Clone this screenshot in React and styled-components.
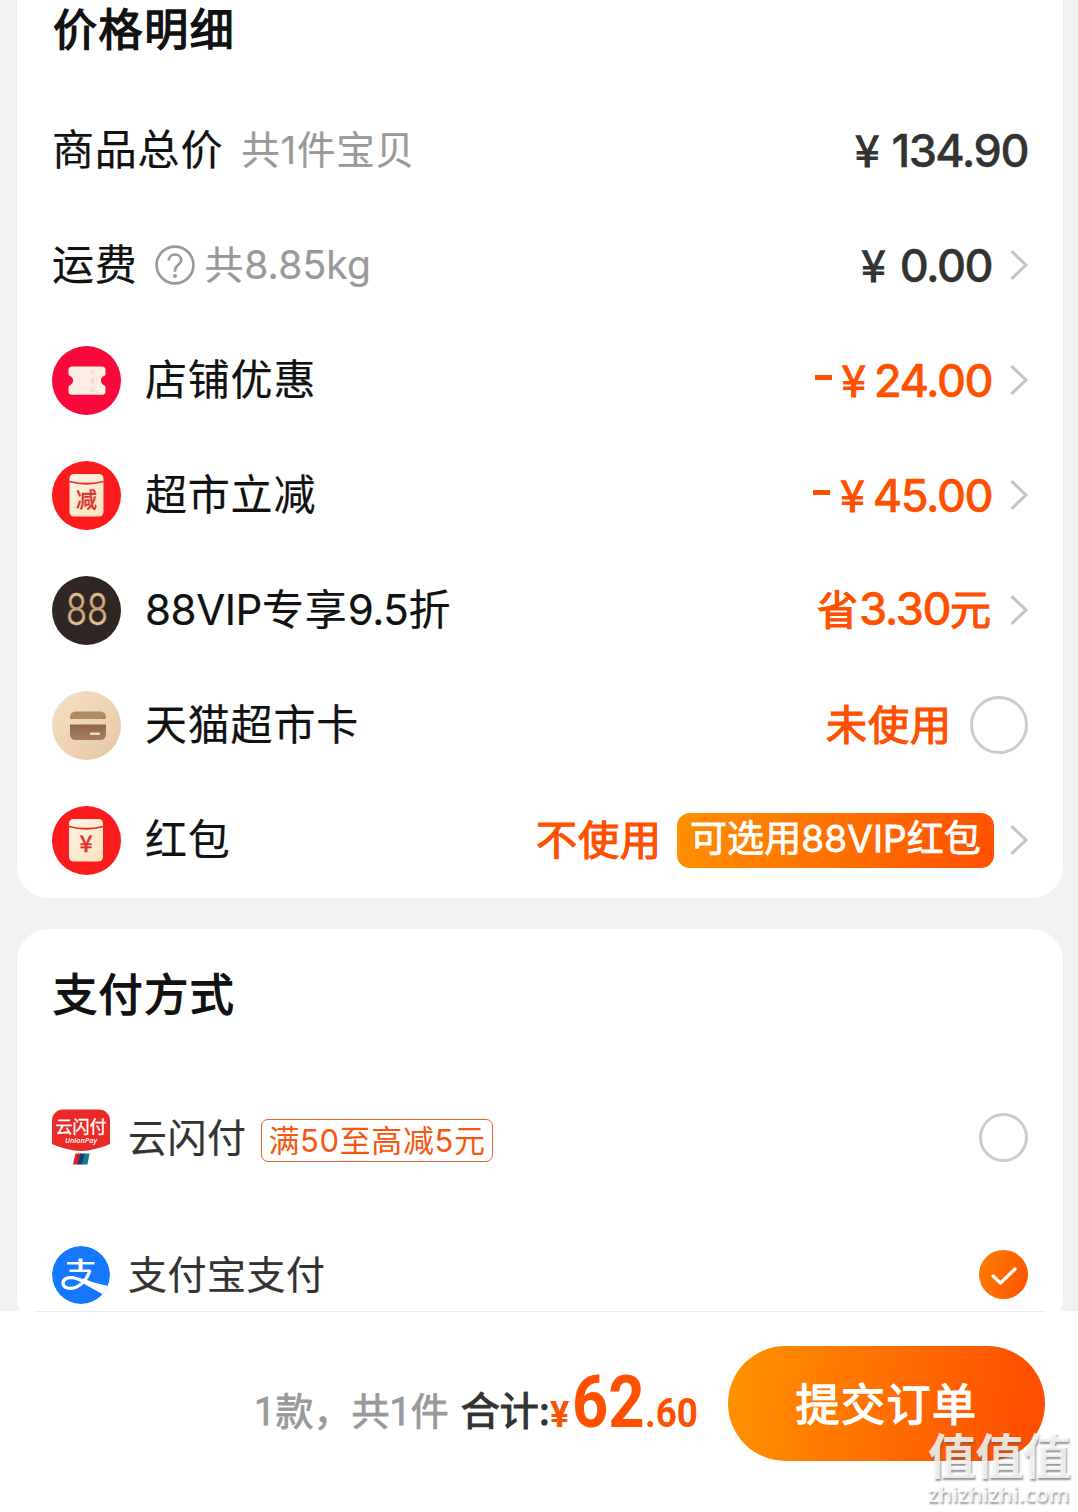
import React from "react";
import styled, { createGlobalStyle } from "styled-components";

const Global = createGlobalStyle`
  * { box-sizing: border-box; }
  body {
    margin: 0;
    background: #fff;
    font-family: Inter, "Noto Sans CJK SC", sans-serif;
  }
`;

const Page = styled.main`
  position: relative;
  width: 1078px;
  height: 1512px;
  overflow: hidden;
  display: flex;
  flex-direction: column;
`;

const Scroll = styled.div`
  flex: none;
  height: 1311px;
  overflow: hidden;
  background: #f1f1f1;
  display: flex;
  flex-direction: column;
  gap: 31px;
  padding: 0 15px 0 17px;
`;

const Card = styled.section`
  flex: none;
  background: #fff;
  border-radius: ${(p) => (p.$first ? "0 0 32px 32px" : "32px")};
  padding: 0 35px;
  height: ${(p) => p.$height}px;
`;

const Title = styled.h2`
  margin: 0;
  padding-top: ${(p) => p.$top}px;
  padding-left: 1px;
  height: ${(p) => p.$height}px;
  font-size: 44px;
  line-height: 60px;
  font-weight: 400;
  letter-spacing: 1.6px;
  color: #111;
  -webkit-text-stroke: 1.4px #111;
`;

const Row = styled.div`
  display: flex;
  align-items: center;
  justify-content: space-between;
  height: ${(p) => p.$height || 115}px;
`;

const Side = styled.div`
  display: flex;
  align-items: center;
  gap: ${(p) => p.$gap || 0}px;
`;

const Label = styled.span`
  font-size: ${(p) => p.$size || 42}px;
  line-height: 60px;
  letter-spacing: ${(p) => p.$spacing ?? 0.8}px;
  color: ${(p) => p.$color || "#111"};
  -webkit-text-stroke: 0.2px currentColor;
  white-space: nowrap;
`;

const Latin = styled.span`
  letter-spacing: ${(p) => p.$spacing ?? -0.4}px;
`;

const Amount = styled.span`
  display: flex;
  align-items: baseline;
  margin-bottom: 2px;
  font-size: 45px;
  line-height: 60px;
  font-weight: 500;
  letter-spacing: -1.5px;
  color: ${(p) => (p.$orange ? "#ff5000" : "#333")};
  -webkit-text-stroke: 0.4px currentColor;
  white-space: nowrap;
`;

const Yen = styled.span`
  font-family: "Noto Sans CJK SC", sans-serif;
  font-size: 44px;
  line-height: 60px;
  font-weight: 400;
  letter-spacing: 0;
  -webkit-text-stroke: 1.2px currentColor;
  margin-right: ${(p) => p.$gap}px;
`;

const Minus = styled.i`
  align-self: center;
  width: 17px;
  height: 5px;
  margin: 0 10px 3px 0;
  background: #ff5000;
`;

const Status = styled.span`
  font-size: 41px;
  line-height: 60px;
  font-weight: 400;
  letter-spacing: 1px;
  color: #ff5000;
  -webkit-text-stroke: 1.2px #ff5000;
  white-space: nowrap;
`;

const Promo = styled.span`
  width: 317px;
  height: 55px;
  padding-left: 13px;
  border-radius: 13px;
  background: linear-gradient(100deg, #ff9000, #ff5000);
  color: #fff;
  font-size: 37px;
  line-height: 51px;
  font-weight: 400;
  letter-spacing: 0.1px;
  -webkit-text-stroke: 0.8px #fff;
  white-space: nowrap;
`;

const Radio = styled.span`
  flex: none;
  width: ${(p) => p.$size}px;
  height: ${(p) => p.$size}px;
  border: 3px solid #ccc;
  border-radius: 50%;
`;

const Checked = styled.span`
  display: grid;
  place-items: center;
  width: 49px;
  height: 49px;
  border-radius: 50%;
  background: linear-gradient(110deg, #ff8000, #ff5000);
`;

const Coupon = styled.span`
  height: 43px;
  width: 232px;
  margin-top: 6px;
  padding-left: 7px;
  border: 1.5px solid #e8602a;
  border-radius: 7px;
  color: #f6560f;
  font-size: 31px;
  line-height: 41px;
  letter-spacing: 0.6px;
  white-space: nowrap;
`;

const Footer = styled.footer`
  flex: 1;
  display: flex;
  flex-direction: column;
  padding: 0 33px 0 35px;
  background: #fff;
`;

const Divider = styled.div`
  height: 1px;
  background: #ebebeb;
`;

const Bar = styled.div`
  display: flex;
  align-items: flex-start;
  justify-content: flex-end;
  padding-top: 34px;
`;

const Summary = styled.div`
  display: flex;
  align-items: baseline;
  height: 115px;
  line-height: 113px;
  margin-right: 31px;
  white-space: nowrap;
`;

const Count = styled.span`
  position: relative;
  top: -2px;
  font-family: Roboto, "Noto Sans CJK SC", sans-serif;
  font-size: 38px;
  font-weight: 400;
  color: #999;
  -webkit-text-stroke: 0.8px #999;
  margin-right: 12px;
`;

const TotalLabel = styled.span`
  position: relative;
  top: -2px;
  font-size: 39px;
  font-weight: 400;
  color: #333;
  -webkit-text-stroke: 1.1px #333;
`;

const Price = styled.span`
  display: inline-block;
  width: ${(p) => p.$width}px;
  font-family: Roboto, sans-serif;
  font-weight: 700;
  font-size: ${(p) => p.$size}px;
  color: #ff5000;
  transform: scaleX(${(p) => p.$squeeze || 1});
  transform-origin: 0 50%;
`;

const Submit = styled.button`
  flex: none;
  width: 317px;
  height: 115px;
  padding: 0;
  border: 0;
  border-radius: 58px;
  background: linear-gradient(100deg, #ff9400, #ff5000 90%);
  color: #fff;
  font-family: inherit;
  font-size: 44px;
  line-height: 118px;
  font-weight: 400;
  letter-spacing: 1.5px;
  -webkit-text-stroke: 1.4px #fff;
`;

const Watermark = styled.div`
  position: absolute;
  right: 6px;
  bottom: 6px;
  width: 144px;
  color: rgba(255, 255, 255, 0.82);
  text-shadow: 1px 2px 2px rgba(90, 90, 90, 0.65);
  white-space: nowrap;
`;

const MarkName = styled.div`
  font-size: 48px;
  line-height: 50px;
  font-weight: 700;
  letter-spacing: -0.5px;
`;

const MarkSite = styled.div`
  font-family: "Open Sans", sans-serif;
  font-size: 21.5px;
  line-height: 24px;
  font-weight: 600;
  letter-spacing: 0.1px;
`;

const Arrow = () => (
  <svg width="18" height="32" viewBox="0 0 18 32" fill="none" stroke="#c4c4c4" strokeWidth="3">
    <path d="M1.5 2.2 16 16 1.5 29.8" />
  </svg>
);

const HelpIcon = () => (
  <svg width="40" height="40" viewBox="0 0 40 40" fill="none" stroke="#999" strokeWidth="2.6">
    <circle cx="20" cy="20" r="18.4" />
    <path d="M13.8 15.600c0-3.700 2.700-6.100 6.200-6.100s6.200 2.400 6.200 5.700c0 4.400-6.200 5-6.200 10.200v1.300" />
    <circle cx="20" cy="31" r="2" fill="#999" stroke="none" />
  </svg>
);

const TicketIcon = () => (
  <svg width="69" height="69" viewBox="0 0 69 69">
    <circle cx="34.5" cy="34.5" r="34.5" fill="#f9083c" />
    <path
      d="M20 20.500h30a3.500 3.500 0 0 1 3.500 3.500v4c0 1-.5 1.600-1.500 2a5 5 0 0 0 0 9.200c1 .4 1.500 1 1.500 2v4a3.500 3.500 0 0 1-3.500 3.500h-30a3.500 3.500 0 0 1-3.500-3.500v-4c0-1 .5-1.600 1.500-2a5 5 0 0 0 0-9.200c-1-.4-1.500-1-1.500-2v-4a3.500 3.500 0 0 1 3.500-3.500z"
      fill="#fdeee4"
    />
    <path d="M40.500 23.500v4.500M40.500 32v5.500M40.500 41.500v4.500" stroke="#f8dccf" strokeWidth="3.500" />
  </svg>
);

const EnvelopeIcon = ({ mark, markSize, markY, shift = 0 }) => (
  <svg width="69" height="69" viewBox="0 0 69 69">
    <defs>
      <linearGradient id={`paper${shift}`} x1="0" y1="0" x2="1" y2="1">
        <stop offset="0" stopColor="#fff4e6" />
        <stop offset="1" stopColor="#fbe2bd" />
      </linearGradient>
    </defs>
    <circle cx="34.5" cy="34.5" r="34.5" fill="#fb1a1c" />
    <rect x={17.5 + shift} y="13" width="34" height="42.5" rx="4.5" fill={`url(#paper${shift})`} />
    <path d={`M${17.5 + shift} 20.5q17 4.500 34 0`} fill="none" stroke="#e0302c" strokeWidth="1.8" />
    <text
      x={34.5 + shift}
      y={markY}
      textAnchor="middle"
      fontFamily="'Noto Sans CJK SC', sans-serif"
      fontSize={markSize}
      fontWeight="500"
      fill="#d8362f"
      stroke="#d8362f"
      strokeWidth="0.3"
    >
      {mark}
    </text>
  </svg>
);

const VipIcon = () => (
  <svg width="69" height="69" viewBox="0 0 69 69">
    <defs>
      <linearGradient id="gold" x1="0" y1="0" x2="0" y2="1">
        <stop offset="0" stopColor="#efcf9f" />
        <stop offset="0.5" stopColor="#c9a06f" />
        <stop offset="1" stopColor="#f2dcb4" />
      </linearGradient>
    </defs>
    <circle cx="34.5" cy="34.5" r="34.5" fill="#302725" />
    <text x="14" y="49" fontFamily="Inter, sans-serif" fontSize="43" fontWeight="300" textLength="42" lengthAdjust="spacingAndGlyphs" fill="url(#gold)" stroke="url(#gold)" strokeWidth="0.4">
      88
    </text>
  </svg>
);

const CardIcon = () => (
  <svg width="69" height="69" viewBox="0 0 69 69">
    <defs>
      <linearGradient id="sand" x1="0" y1="0" x2="1" y2="1">
        <stop offset="0" stopColor="#f6e2c4" />
        <stop offset="1" stopColor="#e5c5a4" />
      </linearGradient>
      <linearGradient id="brown" x1="0" y1="0" x2="0" y2="1">
        <stop offset="0" stopColor="#8f6748" />
        <stop offset="1" stopColor="#a97e60" />
      </linearGradient>
    </defs>
    <circle cx="34.5" cy="34.5" r="34.5" fill="url(#sand)" />
    <path d="M18 28v-2a5.500 5.500 0 0 1 5.500-5.500h25A5.500 5.500 0 0 1 54 26v2z" fill="#b08a61" />
    <path d="M18 33.500h36V43.500a5.500 5.500 0 0 1-5.500 5.500h-25a5.500 5.500 0 0 1-5.500-5.500z" fill="url(#brown)" />
    <rect x="38" y="41.5" width="10" height="2.6" rx="0.8" fill="#f3dcc0" />
  </svg>
);

const UnionPayIcon = () => (
  <svg width="58" height="58" viewBox="0 0 58 58">
    <path d="M11 .500h36a11 11 0 0 1 11 11V35q-5 2.500-15 5-14 4-28 0-10-2.500-15-5V11.500A11 11 0 0 1 11 .500z" fill="#ea2a26" />
    <text x="3.5" y="23.5" fontFamily="'Noto Sans CJK SC', sans-serif" fontSize="17" fontWeight="400" textLength="51" fill="#fff" stroke="#fff" strokeWidth="0.3">
      云闪付
    </text>
    <text x="13" y="34" fontFamily="'Open Sans', sans-serif" fontSize="7.5" fontStyle="italic" fontWeight="600" textLength="32" lengthAdjust="spacingAndGlyphs" fill="#fff">
      UnionPay
    </text>
    <path d="M23.500 44.500h5.500l-2.500 11h-5.500z" fill="#d8232e" />
    <path d="M28 44.500h5l-2.500 11h-5z" fill="#173a78" />
    <path d="M32.500 44.500h5l-2 11h-5.500z" fill="#128087" />
  </svg>
);

const AlipayIcon = () => (
  <svg width="58" height="58" viewBox="0 0 58 58">
    <defs>
      <clipPath id="disc"><circle cx="29" cy="29" r="29" /></clipPath>
    </defs>
    <g clipPath="url(#disc)">
      <circle cx="29" cy="29" r="29" fill="#1677ff" />
      <g fill="none" stroke="#fff" strokeWidth="2.6">
        <path d="M15 17.300h27.500M17.500 24.800h21" />
        <path d="M28.500 12.500v12.500" strokeWidth="4" />
        <path d="M38 24.600C35.500 32 30.500 38.500 24 41.300 18 43.500 11.500 42.200 11 37.500 10.700 33.300 15.500 31 20.500 31.700 27 32.600 33 36 39 38.800" strokeWidth="3.2" />
      </g>
      <path d="M31.500 32.500Q44 38.300 60 40.500L54 50Q43 44 30.500 37z" fill="#fff" />
    </g>
  </svg>
);

const CheckIcon = () => (
  <svg width="28" height="22" viewBox="0 0 28 22" fill="none" stroke="#fff" strokeWidth="3.2" strokeLinecap="round" strokeLinejoin="round">
    <path d="M3 12 10.500 19 25 5" />
  </svg>
);

const discounts = [
  { icon: <TicketIcon />, name: "店铺优惠", amount: "24.00" },
  { icon: <EnvelopeIcon mark="减" markSize={21} markY={46} />, name: "超市立减", amount: "45.00" },
];

export default function App() {
  return (
    <Page>
      <Global />
      <Scroll>
        <Card $first $height={898}>
          <Title $top={-1} $height={92.5}>价格明细</Title>
          <Row>
            <Side $gap={18}>
              <Label>商品总价</Label>
              <Label $size={38.5} $color="#999" $spacing={0.8}>共1件宝贝</Label>
            </Side>
            <Amount><Yen $gap={12}>¥</Yen>134.90</Amount>
          </Row>
          <Row>
            <Side $gap={17}>
              <Label>运费</Label>
              <Side $gap={10}>
                <HelpIcon />
                <Label $size={39} $color="#999" $spacing={0.5}>共<Latin $spacing={0.2}>8.85kg</Latin></Label>
              </Side>
            </Side>
            <Side $gap={18}>
              <Amount><Yen $gap={14}>¥</Yen>0.00</Amount>
              <Arrow />
            </Side>
          </Row>
          {discounts.map((d) => (
            <Row key={d.name}>
              <Side $gap={24}>
                {d.icon}
                <Label>{d.name}</Label>
              </Side>
              <Side $gap={18}>
                <Amount $orange><Minus /><Yen $gap={8}>¥</Yen>{d.amount}</Amount>
                <Arrow />
              </Side>
            </Row>
          ))}
          <Row>
            <Side $gap={24}>
              <VipIcon />
              <Label><Latin>88VIP</Latin>专享<Latin>9.5</Latin>折</Label>
            </Side>
            <Side $gap={18}>
              <Amount $orange><Status>省</Status>3.30<Status>元</Status></Amount>
              <Arrow />
            </Side>
          </Row>
          <Row>
            <Side $gap={24}>
              <CardIcon />
              <Label>天猫超市卡</Label>
            </Side>
            <Side $gap={18}>
              <Status>未使用</Status>
              <Radio $size={58} />
            </Side>
          </Row>
          <Row>
            <Side $gap={24}>
              <EnvelopeIcon mark="¥" markSize={23} markY={46} shift={-0.5} />
              <Label>红包</Label>
            </Side>
            <Side $gap={16}>
              <Side $gap={15}>
                <Status>不使用</Status>
                <Promo>可选用88VIP红包</Promo>
              </Side>
              <Arrow />
            </Side>
          </Row>
        </Card>
        <Card $height={400}>
          <Title $top={36} $height={140}>支付方式</Title>
          <Row $height={137}>
            <Side $gap={14}>
              <Side $gap={18}>
                <UnionPayIcon />
                <Label $size={39} $color="#333" $spacing={0.5}>云闪付</Label>
              </Side>
              <Coupon>满50至高减5元</Coupon>
            </Side>
            <Radio $size={49} />
          </Row>
          <Row $height={137}>
            <Side $gap={18}>
              <AlipayIcon />
              <Label $size={39} $color="#333" $spacing={0.5}>支付宝支付</Label>
            </Side>
            <Checked><CheckIcon /></Checked>
          </Row>
        </Card>
      </Scroll>
      <Footer>
        <Divider />
        <Bar>
          <Summary>
            <Count>1款，共1件</Count>
            <TotalLabel>合计:</TotalLabel>
            <Price $size={36} $width={22}>¥</Price>
            <Price $size={72} $width={73} $squeeze={0.88}>62</Price>
            <Price $size={40} $width={52} $squeeze={0.92}>.60</Price>
          </Summary>
          <Submit>提交订单</Submit>
        </Bar>
      </Footer>
      <Watermark>
        <MarkName>值值值</MarkName>
        <MarkSite>zhizhizhi.com</MarkSite>
      </Watermark>
    </Page>
  );
}
